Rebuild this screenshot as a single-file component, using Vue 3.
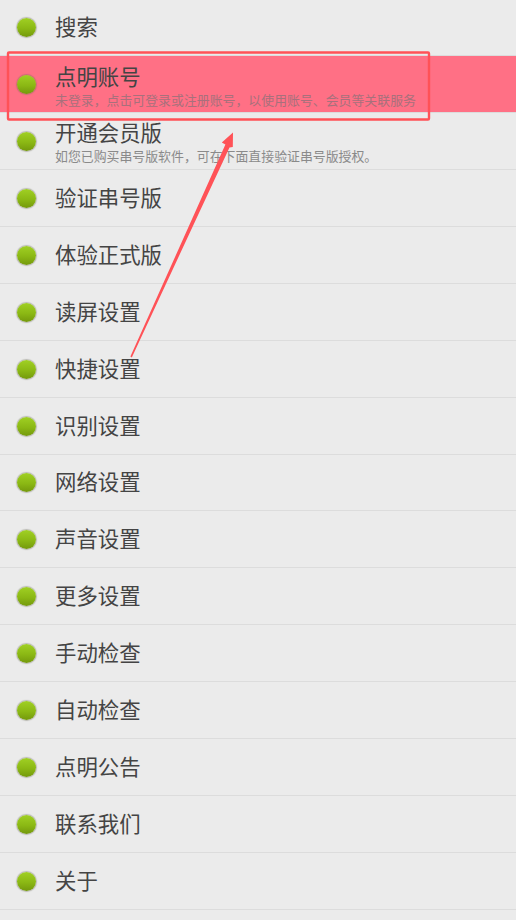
<template>
  <div class="screen">
    <ul class="menu">
      <li
        v-for="item in items"
        :key="item.title"
        :class="['row', { active: item.active, double: item.sub }]"
      >
        <span class="dot"></span>
        <div class="text">
          <div class="title">{{ item.title }}</div>
          <div v-if="item.sub" class="sub">{{ item.sub }}</div>
        </div>
      </li>
    </ul>

    <!-- annotation drawn over the list -->
    <svg class="marks" width="516" height="920" viewBox="0 0 516 920">
      <rect x="8" y="52.5" width="421" height="67" rx="1" fill="none" stroke="#ff5257" stroke-width="2.4" />
      <polygon
        points="130.4,356.6 131.8,357.4 229.5,147.4 232.8,147 233,132.5 221.8,142.6 225.4,144.6"
        fill="#ff5257"
      />
    </svg>
  </div>
</template>

<script setup>
const items = [
  { title: '搜索' },
  { title: '点明账号', sub: '未登录，点击可登录或注册账号，以使用账号、会员等关联服务', active: true },
  { title: '开通会员版', sub: '如您已购买串号版软件，可在下面直接验证串号版授权。' },
  { title: '验证串号版' },
  { title: '体验正式版' },
  { title: '读屏设置' },
  { title: '快捷设置' },
  { title: '识别设置' },
  { title: '网络设置' },
  { title: '声音设置' },
  { title: '更多设置' },
  { title: '手动检查' },
  { title: '自动检查' },
  { title: '点明公告' },
  { title: '联系我们' },
  { title: '关于' }
];
</script>

<style>
html,
body {
  margin: 0;
  background: #ebebeb;
}
</style>

<style scoped>
.screen {
  position: relative;
  width: 516px;
  height: 920px;
  overflow: hidden;
  background: #ebebeb;
  font-family: "Noto Sans CJK SC", "Noto Sans", sans-serif;
}

.menu {
  list-style: none;
  margin: -0.85px 0 0;
  padding: 0;
}

.row {
  display: flex;
  align-items: center;
  box-sizing: border-box;
  height: 56.93px;
  padding-left: 17px;
  border-bottom: 1px solid #dcdcdc;
}

.row.active {
  background: #ff7085;
}

.dot {
  flex: none;
  width: 19px;
  height: 19px;
  margin-top: 1px;
  margin-right: 19px;
  border-radius: 50%;
  background: linear-gradient(#a0d024, #8bb814 55%, #74990c);
  box-shadow: 0 0 1px 1px rgba(110, 110, 90, 0.4);
}

.text {
  margin-top: -2px;
}

.title {
  font-size: 21.4px;
  line-height: 30px;
  color: #444;
}

.sub {
  font-size: 12.9px;
  line-height: 16px;
  color: #8a8a8a;
  white-space: nowrap;
  margin-top: 1px;
}

.active .sub {
  color: #a8707c;
}

.double .text {
  margin-top: 0;
}

.marks {
  position: absolute;
  top: 0;
  left: 0;
  pointer-events: none;
}
</style>
